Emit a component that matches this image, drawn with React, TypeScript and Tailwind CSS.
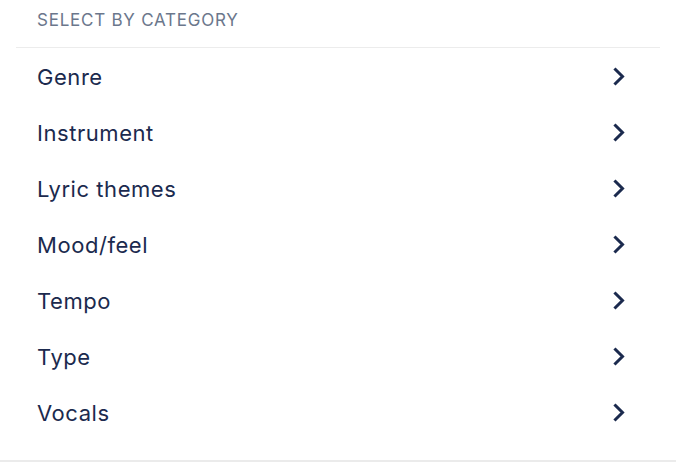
const CATEGORIES = ["Genre", "Instrument", "Lyric themes", "Mood/feel", "Tempo", "Type", "Vocals"];

function Chevron() {
  return (
    <svg width="13" height="19" viewBox="0 0 13 19" fill="none" className="text-[#1b2a4e]">
      <path d="M2.5 2.5 L9.5 9.5 L2.5 16.5" stroke="currentColor" strokeWidth="3" strokeLinecap="square" />
    </svg>
  );
}

export default function App() {
  return (
    <div className="w-[676px] h-[462px] bg-white border-b-2 border-[#ebebeb] font-['Inter',sans-serif]">
      <div className="px-4 pb-5">
        <div className="pt-2 pb-[15px] pl-[21px] border-b border-[#ececec]">
          <p className="text-[17px] leading-6 tracking-[0.045em] text-[#6b778c] uppercase">Select by category</p>
        </div>
        <ul>
          {CATEGORIES.map((c) => (
            <li key={c} className="h-14 flex items-center justify-between pl-[21px] pr-[34px] cursor-pointer">
              <span className="text-[22px] leading-7 tracking-[0.025em] text-[#1b2a4e] translate-y-[1px]">{c}</span>
              <Chevron />
            </li>
          ))}
        </ul>
      </div>
    </div>
  );
}
